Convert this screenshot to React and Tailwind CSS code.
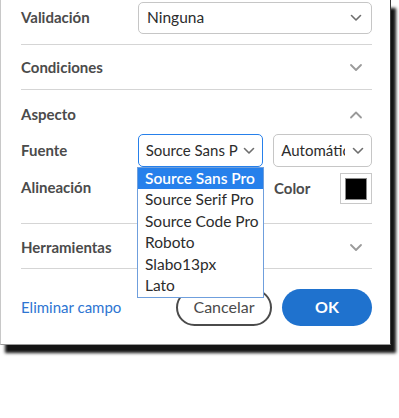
import React from "react";

const Chevron = ({ up = false, className = "" }) => (
  <svg width="14" height="9" viewBox="0 0 14 9" className={className}>
    <path
      d={up ? "M2 7.5 L7 2.5 L12 7.5" : "M2 2 L7 7 L12 2"}
      fill="none"
      stroke="currentColor"
      strokeWidth="1.8"
      strokeLinecap="round"
      strokeLinejoin="round"
    />
  </svg>
);

const SmallChevron = () => (
  <svg width="12" height="8" viewBox="0 0 12 8">
    <path d="M1.5 1.5 L6 6 L10.5 1.5" fill="none" stroke="#6e6e6e" strokeWidth="1.6" strokeLinecap="round" strokeLinejoin="round" />
  </svg>
);

export default function App() {
  const font = { fontFamily: "Lato, 'Noto Sans', sans-serif" };
  const fonts = ["Source Sans Pro", "Source Serif Pro", "Source Code Pro", "Roboto", "Slabo13px", "Lato"];
  return (
    <div className="w-[399px] h-[418px] bg-white relative overflow-hidden" style={font}>
      <div className="relative w-[391px] h-[345px] bg-white border-l border-b border-r border-l-[#c8c8c8] border-b-[#9a9a9a] border-r-[#3a3a3a] shadow-[5px_8px_3px_rgba(0,0,0,0.92)] text-[#4b4b4b]">
        <div className="pl-[20px] pr-[18px]">
          {/* Validación */}
          <div className="flex items-center h-[45px] pb-[10px] pt-[1px] border-b border-[#d5d5d5]">
            <div className="w-[117px] text-[15px] font-bold">Validación</div>
            <div className="flex-1 h-[32px] border border-[#c6c6c6] rounded-[5px] flex items-center justify-between pl-[8px] pr-[9px] text-[15.5px] text-[#2c2c2c]">
              <span>Ninguna</span>
              <SmallChevron />
            </div>
          </div>
          {/* Condiciones */}
          <div className="flex items-center justify-between h-[45px] border-b border-[#d5d5d5] text-[15px] font-bold">
            <span>Condiciones</span>
            <Chevron className="text-[#9a9a9a] mr-[9px]" />
          </div>
          {/* Aspecto */}
          <div className="flex items-center justify-between h-[44px] text-[15px] font-bold pt-[4px]">
            <span>Aspecto</span>
            <Chevron up className="text-[#9a9a9a] mr-[9px]" />
          </div>
          <div className="flex items-center h-[33px]">
            <div className="w-[117px] text-[15px] font-bold">Fuente</div>
            <div className="w-[126px] h-[33px] border border-[#2680eb] rounded-[5px] flex items-center justify-between pl-[7px] pr-[7px] text-[15px] text-[#2c2c2c] overflow-hidden">
              <span className="whitespace-nowrap w-[96px]">Source Sans P</span>
              <SmallChevron />
            </div>
            <div className="ml-[10px] w-[99px] h-[33px] border border-[#c6c6c6] rounded-[5px] flex items-center justify-between pl-[7px] pr-[7px] text-[15px] text-[#2c2c2c] overflow-hidden">
              <span className="whitespace-nowrap overflow-hidden w-[64px]">Automátic</span>
              <SmallChevron />
            </div>
          </div>
          <div className="flex items-start h-[57px] border-b border-[#d5d5d5] pt-[6px]">
            <div className="w-[253px] text-[15px] font-bold pt-[3px]">Alineación</div>
            <div className="flex-1 text-[15px] font-bold pt-[4px]">Color</div>
            <div className="w-[32px] h-[31px] border border-[#c8c8c8] flex items-center justify-center">
              <div className="w-[22px] h-[22px] bg-black border border-[#8a8a8a]"></div>
            </div>
          </div>
          {/* Herramientas */}
          <div className="flex items-center justify-between h-[45px] border-b border-[#d5d5d5] text-[15px] font-bold pt-[2px]">
            <span>Herramientas</span>
            <Chevron className="text-[#9a9a9a] mr-[9px]" />
          </div>
          {/* Footer */}
          <div className="flex items-center h-[80px] pb-[4px]">
            <span className="text-[15px] text-[#2d75d2] flex-1">Eliminar campo</span>
            <button className="w-[96px] h-[37px] rounded-full border-2 border-[#4b4b4b] text-[16px] text-[#4b4b4b]">Cancelar</button>
            <button className="ml-[10px] w-[90px] h-[37px] rounded-full bg-[#1f72ce] text-white text-[16px] font-bold">OK</button>
          </div>
        </div>

        {/* Dropdown list overlay */}
        <div className="absolute left-[136px] top-[167px] w-[127px] bg-white border border-[#6f9fdd] text-[15.5px] text-[#2c2c2c]">
          {fonts.map((f, i) => (
            <div
              key={f}
              className={
                i === 0
                  ? "h-[21.4px] leading-[21.4px] pl-[7px] bg-[#2680eb] text-white font-semibold"
                  : "h-[21.4px] leading-[21.4px] pl-[7px]"
              }
            >
              {f}
            </div>
          ))}
          <div className="h-[1px]"></div>
        </div>
      </div>
    </div>
  );
}
